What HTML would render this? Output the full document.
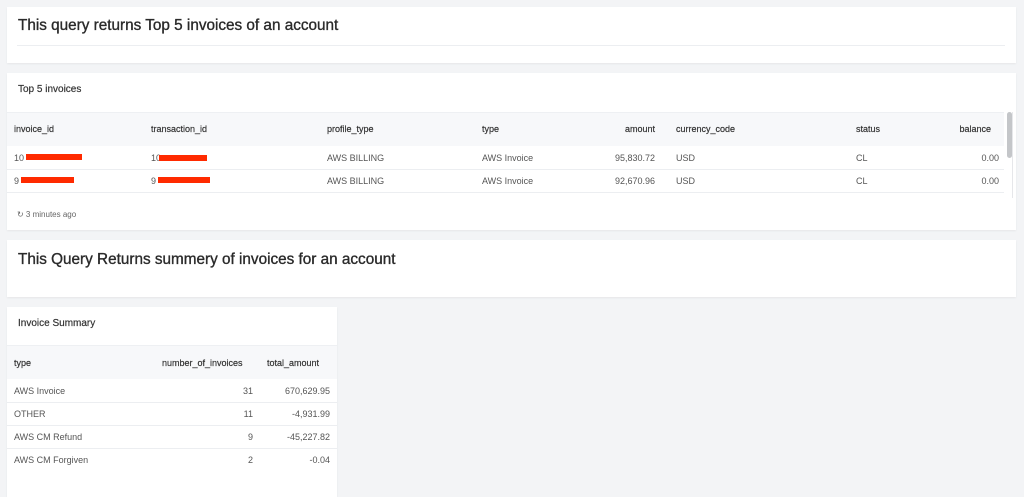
<!DOCTYPE html>
<html><head><style>
*{margin:0;padding:0;box-sizing:border-box}
body{width:1024px;height:493px;background:#f3f4f6;font-family:"Liberation Sans",sans-serif;position:relative;overflow:hidden;color:#333}
.p{position:absolute;background:#fff;box-shadow:0 1px 2px rgba(0,0,0,.06)}
.a{position:absolute;white-space:nowrap}
.h{font-size:15.3px;color:#2a2a2a;-webkit-text-stroke:0.35px #2a2a2a}
.t{font-size:10px;color:#333;-webkit-text-stroke:0.2px #333}
.c{font-size:9px;color:#555}
.hd{color:#333;-webkit-text-stroke:0.2px #333}
.r{text-align:right}
.red{position:absolute;background:#ff2a00;height:6px}
</style></head><body>
<div class="p" style="left:7px;top:7px;width:1009px;height:56px">
 <div class="a h" style="left:11px;top:10px">This query returns Top 5 invoices of an account</div>
 <div class="a" style="left:10px;top:38px;width:988px;height:1px;background:#eceef1"></div>
</div>
<div class="p" style="left:7px;top:73px;width:1009px;height:157px">
 <div class="a t" style="left:11px;top:11px">Top 5 invoices</div>
 <div class="a" style="left:0;top:39px;width:997px;height:34px;background:#f7f8fa;border-top:1px solid #eef0f3"></div>
 <div class="a" style="left:0;top:96px;width:997px;height:1px;background:#eceef1"></div>
 <div class="a" style="left:0;top:119px;width:997px;height:1px;background:#eceef1"></div>
 <div class="a" style="left:1000px;top:39px;width:5px;height:46px;background:#c4c6c9;border-radius:3px"></div>
 <div class="a" style="left:1005px;top:39px;width:1px;height:86px;background:#e6e7ea"></div>
 <div class="a c hd" style="left:7px;top:51px">invoice_id</div>
 <div class="a c hd" style="left:144px;top:51px">transaction_id</div>
 <div class="a c hd" style="left:320px;top:51px">profile_type</div>
 <div class="a c hd" style="left:475px;top:51px">type</div>
 <div class="a c r hd" style="left:580px;width:68px;top:51px">amount</div>
 <div class="a c hd" style="left:669px;top:51px">currency_code</div>
 <div class="a c hd" style="left:849px;top:51px">status</div>
 <div class="a c r hd" style="left:920px;width:64px;top:51px">balance</div>

 <div class="a c" style="left:7px;top:80px">10</div><div class="red" style="left:19px;top:81px;width:56px"></div>
 <div class="a c" style="left:144px;top:80px">10</div><div class="red" style="left:152px;top:82px;width:48px"></div>
 <div class="a c" style="left:320px;top:80px">AWS BILLING</div>
 <div class="a c" style="left:475px;top:80px">AWS Invoice</div>
 <div class="a c r" style="left:580px;width:68px;top:80px">95,830.72</div>
 <div class="a c" style="left:669px;top:80px">USD</div>
 <div class="a c" style="left:849px;top:80px">CL</div>
 <div class="a c r" style="left:920px;width:72px;top:80px">0.00</div>

 <div class="a c" style="left:7px;top:103px">9</div><div class="red" style="left:14px;top:104px;width:53px"></div>
 <div class="a c" style="left:144px;top:103px">9</div><div class="red" style="left:151px;top:104px;width:52px"></div>
 <div class="a c" style="left:320px;top:103px">AWS BILLING</div>
 <div class="a c" style="left:475px;top:103px">AWS Invoice</div>
 <div class="a c r" style="left:580px;width:68px;top:103px">92,670.96</div>
 <div class="a c" style="left:669px;top:103px">USD</div>
 <div class="a c" style="left:849px;top:103px">CL</div>
 <div class="a c r" style="left:920px;width:72px;top:103px">0.00</div>
 <div class="a" style="left:10px;top:137px;font-size:8px;color:#666">↻ 3 minutes ago</div>
</div>
<div class="p" style="left:7px;top:240px;width:1009px;height:57px">
 <div class="a h" style="left:11px;top:11px">This Query Returns summery of invoices for an account</div>
</div>
<div class="p" style="left:7px;top:307px;width:330px;height:190px">
 <div class="a t" style="left:11px;top:11px">Invoice Summary</div>
 <div class="a" style="left:0;top:38px;width:330px;height:34px;background:#f7f8fa;border-top:1px solid #eef0f3"></div>
 <div class="a c hd" style="left:7px;top:51px">type</div>
 <div class="a c hd" style="left:155px;top:51px">number_of_invoices</div>
 <div class="a c hd" style="left:260px;top:51px">total_amount</div>
 <div class="a" style="left:0;top:95px;width:330px;height:1px;background:#eceef1"></div>
 <div class="a" style="left:0;top:118px;width:330px;height:1px;background:#eceef1"></div>
 <div class="a" style="left:0;top:141px;width:330px;height:1px;background:#eceef1"></div>
 <div class="a c" style="left:7px;top:79px">AWS Invoice</div><div class="a c r" style="left:200px;width:46px;top:79px">31</div><div class="a c r" style="left:250px;width:73px;top:79px">670,629.95</div>
 <div class="a c" style="left:7px;top:102px">OTHER</div><div class="a c r" style="left:200px;width:46px;top:102px">11</div><div class="a c r" style="left:250px;width:73px;top:102px">-4,931.99</div>
 <div class="a c" style="left:7px;top:125px">AWS CM Refund</div><div class="a c r" style="left:200px;width:46px;top:125px">9</div><div class="a c r" style="left:250px;width:73px;top:125px">-45,227.82</div>
 <div class="a c" style="left:7px;top:148px">AWS CM Forgiven</div><div class="a c r" style="left:200px;width:46px;top:148px">2</div><div class="a c r" style="left:250px;width:73px;top:148px">-0.04</div>
</div>
</body></html>
